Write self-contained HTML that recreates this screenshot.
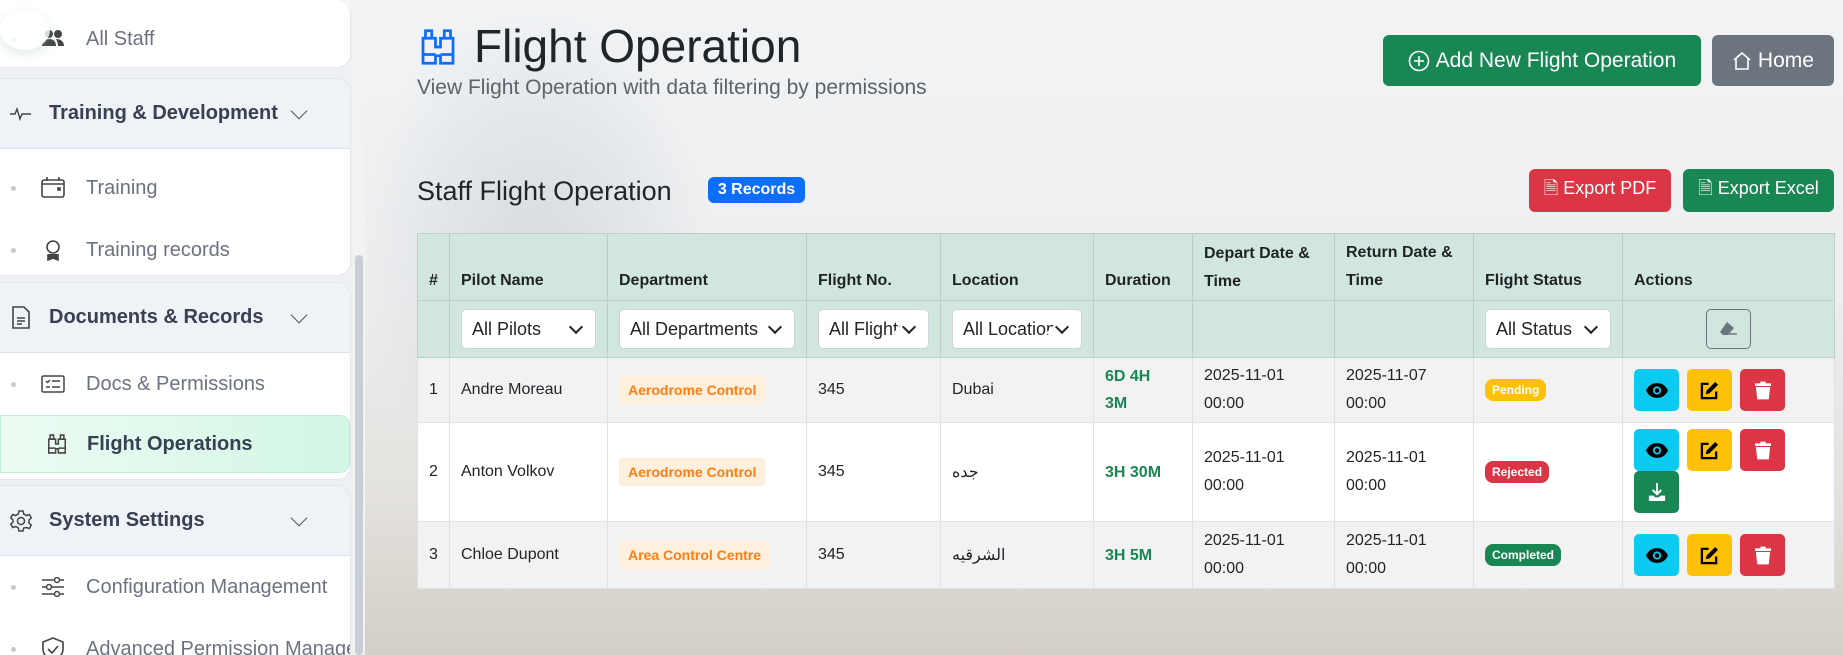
<!DOCTYPE html>
<html style="width:1843px;height:655px;overflow:hidden"><head><meta charset="utf-8"><style>
*{box-sizing:border-box;margin:0;padding:0}
body{width:1843px;height:655px;overflow:hidden;font-family:"Liberation Sans","Noto Sans CJK SC",sans-serif;position:relative;background:#eceef0}
.main{position:absolute;left:355px;top:0;width:1488px;height:655px;background:linear-gradient(180deg,#f1f3f5 0%,#edeef0 45%,#e4e2de 75%,#d3cec6 100%);overflow:hidden}
.tower{position:absolute;left:0;top:0;width:360px;height:420px;background:radial-gradient(ellipse at 50% 60%,rgba(190,200,205,.5),rgba(230,234,237,0) 70%)}
.side{position:absolute;left:0;top:0;width:353px;height:655px;background:#eef0f3;overflow:hidden}
.card{position:absolute;left:0;width:351px;background:#fff;border:1px solid #e2e6ea;border-left:none;border-radius:0 14px 14px 0;overflow:hidden}
.gh{height:70px;background:#eff2f6;border-bottom:1px solid #dde3ea;display:flex;align-items:center;font-size:20px;font-weight:bold;color:#374151;position:relative;white-space:nowrap}
.gh svg{margin-left:10px;margin-right:17px}
.gh .chev{position:absolute;left:293px;top:26px;width:12px;height:12px;border-right:1.5px solid #555;border-bottom:1.5px solid #555;transform:rotate(45deg)}
.it{height:62px;display:flex;align-items:center;font-size:20px;color:#6b7280;position:relative;white-space:nowrap}
.it .dot{flex:none;width:5px;height:5px;border-radius:50%;background:#c5cad1;margin-left:11px;margin-right:25px}
.it svg{margin-right:21px;flex:none}
.scroll{position:absolute;left:353px;top:0;width:12px;height:655px;background:#f2f2f2}
.thumb{position:absolute;left:355px;top:255px;width:8px;height:400px;background:#c9ced6;border-radius:4px}
.btn{position:absolute;border-radius:6px;color:#fff;display:flex;align-items:center;justify-content:center;font-size:21px}
table{position:absolute;left:417px;top:233px;border-collapse:collapse;table-layout:fixed;font-size:16px;color:#212529}
td,th{border:1px solid #dee2e6;padding:0 11px;vertical-align:middle;text-align:left}
th{background:#d1e7dd;font-weight:bold;border-color:#bcd0c7;color:#1f2328}
.fr td{background:#d1e7dd;border-color:#bcd0c7}
.sel{background:#fff;border:1px solid #ced4da;border-radius:5px;height:40px;display:flex;align-items:center;padding-left:10px;font-size:18px;white-space:nowrap;overflow:hidden;position:relative;color:#212529}
.sel:after{content:"";position:absolute;right:14px;top:12px;width:8px;height:8px;border-right:2px solid #222;border-bottom:2px solid #222;transform:rotate(45deg);background:#fff;box-shadow:4px 4px 0 6px #fff}
.r1 td,.r3 td{background:#f2f2f2}
.r2 td{background:#fff}
.dept{background:#fff0dd;color:#fd7e14;font-weight:bold;font-size:14px;padding:6px 9px;border-radius:4px;display:inline-block;white-space:nowrap}
.dur{color:#198754;font-weight:bold;font-size:16px;line-height:27px}
.dt{line-height:28px}
.st{font-size:12px;font-weight:bold;padding:4px 7px;border-radius:8px;color:#fff;display:inline-block}
.ab{display:inline-flex;align-items:center;justify-content:center;width:45px;height:42px;border-radius:5px;margin-right:8px;vertical-align:top}
</style></head><body>
<div class="main"><div class="tower"></div></div>
<div class="side">
 <div style="position:absolute;left:0;top:0;width:351px;height:30px;background:#f5f6f7"></div>
 <div style="position:absolute;left:28px;top:0;font-size:26px;font-weight:bold;color:#fff;opacity:.7">AVIATION HR</div>
 <div class="card" style="top:0;height:68px;border-top:none"><div class="it" style="height:30px;margin-top:24px"><span class="dot"></span><svg width="24" height="20" viewBox="0 0 24 20" fill="#444"><circle cx="8" cy="5" r="4"/><circle cx="17" cy="5" r="4"/><path d="M1 17c0-5 3-7 7-7s7 2 7 7zM15 10c4 0 8 2 8 7h-6c0-3-1-5-2-7z"/></svg>All Staff</div></div>
 <div style="position:absolute;left:0;top:10px;width:50px;height:40px;border-radius:50%;background:rgba(255,255,255,.8);box-shadow:0 4px 10px rgba(120,180,160,.25)"></div>
 <div class="card" style="top:78px;height:198px"><div class="gh"><svg width="22" height="14" viewBox="0 0 22 14" fill="none" stroke="#444" stroke-width="1.4"><path d="M0 7h5l2-5 3 10 2-5h9"/></svg>Training &amp; Development<span class="chev"></span></div>
  <div class="it" style="margin-top:8px"><span class="dot"></span><svg width="24" height="22" viewBox="0 0 24 22" fill="none" stroke="#444" stroke-width="1.6"><rect x="1" y="3" width="22" height="17" rx="2"/><path d="M1 7h22M6 0v4M18 0v4"/><rect x="17" y="11" width="2" height="2" fill="#444"/></svg>Training</div>
  <div class="it"><span class="dot"></span><svg width="24" height="24" viewBox="0 0 24 24" fill="none" stroke="#444" stroke-width="1.6"><circle cx="12" cy="9" r="6"/><path d="M7 16v6l5-2 5 2v-6" fill="#444"/></svg>Training records</div></div>
 <div class="card" style="top:282px;height:198px"><div class="gh"><svg width="22" height="24" viewBox="0 0 22 24" fill="none" stroke="#444" stroke-width="1.6"><path d="M3 1h11l5 5v16H3z"/><path d="M7 12h8M7 15h8M7 18h5"/></svg>Documents &amp; Records<span class="chev"></span></div>
  <div class="it"><span class="dot"></span><svg width="24" height="18" viewBox="0 0 24 18" fill="none" stroke="#444" stroke-width="1.5"><rect x="1" y="1" width="22" height="16" rx="1.5"/><path d="M5 6l1.5 1.5L9 5M5 12h4M11 6h8M11 12h8"/></svg>Docs &amp; Permissions</div>
  <div class="it" style="height:58px;background:linear-gradient(90deg,#ecfbf3,#d2f7e4);border:1px solid #bfeed6;border-radius:0 10px 10px 0;font-weight:bold;color:#374151;padding-left:45px"><svg width="22" height="22" viewBox="0 0 16 16" fill="none" stroke="#444" stroke-width="1.1" style="margin-right:19px"><path d="M3 1.5h2.5v3h-2.5zM10.5 1.5h2.5v3h-2.5zM2 4.5h5v3.5h2V4.5h5v10h-5v-3h-2v3h-5zM2 11h5M9 11h5"/></svg>Flight Operations</div></div>
 <div class="card" style="top:485px;height:180px"><div class="gh"><svg width="22" height="22" viewBox="0 0 22 22" fill="none" stroke="#444" stroke-width="1.5"><circle cx="11" cy="11" r="3.5"/><path d="M9 1h4l.7 3 2.6 1.5 3-1 2 3.4-2.3 2.1v3l2.3 2.1-2 3.4-3-1L13.7 18 13 21H9l-.7-3-2.6-1.5-3 1-2-3.4L3 12v-2L.7 7.9l2-3.4 3 1L8.3 4z"/></svg>System Settings<span class="chev"></span></div>
  <div class="it"><span class="dot"></span><svg width="24" height="20" viewBox="0 0 24 20" fill="none" stroke="#444" stroke-width="1.5"><path d="M1 3h22M1 10h22M1 17h22"/><circle cx="16" cy="3" r="2.5" fill="#fff"/><circle cx="8" cy="10" r="2.5" fill="#fff"/><circle cx="16" cy="17" r="2.5" fill="#fff"/></svg>Configuration Management</div>
  <div class="it"><span class="dot"></span><svg width="24" height="24" viewBox="0 0 24 24" fill="none" stroke="#444" stroke-width="1.6"><path d="M12 1l10 4v7c0 6-5 10-10 11C7 22 2 18 2 12V5z"/><path d="M7 12l4 4 6-7"/></svg>Advanced Permission Manage</div></div>
</div>
<div class="scroll"></div><div class="thumb"></div>

<svg style="position:absolute;left:418px;top:27px" width="40" height="40" viewBox="0 0 16 16" fill="none" stroke="#0d6efd" stroke-width="1.1"><path d="M3 1.5h2.5v3h-2.5zM10.5 1.5h2.5v3h-2.5zM2 4.5h5v3.5h2V4.5h5v10h-5v-3h-2v3h-5zM2 11h5M9 11h5"/></svg>
<div style="position:absolute;left:474px;top:19px;font-size:46px;color:#212529">Flight Operation</div>
<div style="position:absolute;left:417px;top:76px;font-size:21px;color:#5c636a">View Flight Operation with data filtering by permissions</div>
<div class="btn" style="left:1383px;top:35px;width:318px;height:51px;background:#198754"><svg width="22" height="22" viewBox="0 0 22 22" fill="none" stroke="#fff" stroke-width="1.6"><circle cx="11" cy="11" r="9.5"/><path d="M11 6v10M6 11h10"/></svg>&nbsp;Add New Flight Operation</div>
<div class="btn" style="left:1712px;top:35px;width:122px;height:51px;background:#6c757d"><svg width="20" height="20" viewBox="0 0 20 20" fill="none" stroke="#fff" stroke-width="1.6"><path d="M2 9l8-7 8 7M4 7v11h12V7"/></svg>&nbsp;Home</div>
<div style="position:absolute;left:417px;top:176px;font-size:27px;color:#212529">Staff Flight Operation</div>
<div style="position:absolute;left:708px;top:177px;width:97px;height:26px;background:#0d6efd;border-radius:6px;color:#fff;font-weight:bold;font-size:16px;display:flex;align-items:center;justify-content:center">3 Records</div>
<div class="btn" style="left:1529px;top:169px;width:142px;height:43px;background:#dc3545;font-size:18px">🗎 Export PDF</div>
<div class="btn" style="left:1683px;top:169px;width:151px;height:43px;background:#198754;font-size:18px">🗎 Export Excel</div>

<svg width="0" height="0" style="position:absolute"><defs>
<symbol id="eye" viewBox="0 0 24 16"><path d="M0 8C3 2 7 0 12 0s9 2 12 8c-3 6-7 8-12 8S3 14 0 8z" fill="#000"/><circle cx="12" cy="8" r="4.5" fill="#0dcaf0"/><circle cx="12" cy="8" r="2.5" fill="#000"/></symbol>
<symbol id="ed" viewBox="0 0 20 20"><path d="M9 3H2v15h15v-7" fill="none" stroke="#000" stroke-width="2.4"/><path d="M16 1l3 3-9 9-4 1 1-4z" fill="#000"/></symbol>
<symbol id="tr" viewBox="0 0 18 20"><path d="M6 0h6v2h6v3H0V2h6zM1 6h16l-1.5 14h-13z" fill="#fff"/></symbol>
<symbol id="dl" viewBox="0 0 20 20"><path d="M9 0h2v10l3-3 1.5 1.5L10 14 4.5 8.5 6 7l3 3zM1 14h5l2 2h4l2-2h5v6H1z" fill="#fff"/></symbol>
</defs></svg>
<table>
<colgroup><col style="width:32px"><col style="width:158px"><col style="width:199px"><col style="width:134px"><col style="width:153px"><col style="width:99px"><col style="width:142px"><col style="width:139px"><col style="width:149px"><col style="width:212px"></colgroup>
<tr style="height:67px"><th style="vertical-align:bottom;padding-bottom:10px">#</th><th style="vertical-align:bottom;padding-bottom:10px">Pilot Name</th><th style="vertical-align:bottom;padding-bottom:10px">Department</th><th style="vertical-align:bottom;padding-bottom:10px">Flight No.</th><th style="vertical-align:bottom;padding-bottom:10px">Location</th><th style="vertical-align:bottom;padding-bottom:10px">Duration</th><th style="line-height:28px;padding-top:2px">Depart Date &amp; Time</th><th style="line-height:28px">Return Date &amp; Time</th><th style="vertical-align:bottom;padding-bottom:10px">Flight Status</th><th style="vertical-align:bottom;padding-bottom:10px">Actions</th></tr>
<tr class="fr" style="height:57px"><td></td><td><div class="sel">All Pilots</div></td><td><div class="sel">All Departments</div></td><td><div class="sel">All Flights</div></td><td><div class="sel">All Locations</div></td><td></td><td></td><td></td><td><div class="sel">All Status</div></td><td style="text-align:center"><div style="display:inline-flex;align-items:center;justify-content:center;width:45px;height:40px;border:1.5px solid #6c757d;border-radius:5px"><svg width="20" height="16" viewBox="0 0 20 16"><path d="M8 1l7 6-6 7H4L1 11z" fill="#6c757d"/><path d="M5 13h13" stroke="#6c757d" stroke-width="1.5"/></svg></div></td></tr>
<tr class="r1" style="height:65px"><td>1</td><td>Andre Moreau</td><td><span class="dept">Aerodrome Control</span></td><td>345</td><td>Dubai</td><td class="dur">6D 4H<br>3M</td><td class="dt">2025-11-01<br>00:00</td><td class="dt">2025-11-07<br>00:00</td><td><span class="st" style="background:#ffc107">Pending</span></td><td><span class="ab" style="background:#0dcaf0"><svg width="22" height="15"><use href="#eye"/></svg></span><span class="ab" style="background:#ffc107"><svg width="19" height="19"><use href="#ed"/></svg></span><span class="ab" style="background:#dc3545"><svg width="16" height="19"><use href="#tr"/></svg></span></td></tr>
<tr class="r2" style="height:99px"><td>2</td><td>Anton Volkov</td><td><span class="dept">Aerodrome Control</span></td><td>345</td><td>جده</td><td class="dur">3H 30M</td><td class="dt">2025-11-01<br>00:00</td><td class="dt">2025-11-01<br>00:00</td><td><span class="st" style="background:#dc3545">Rejected</span></td><td style="padding-top:6px;vertical-align:top"><span class="ab" style="background:#0dcaf0"><svg width="22" height="15"><use href="#eye"/></svg></span><span class="ab" style="background:#ffc107"><svg width="19" height="19"><use href="#ed"/></svg></span><span class="ab" style="background:#dc3545"><svg width="16" height="19"><use href="#tr"/></svg></span><br><span class="ab" style="background:#198754"><svg width="18" height="18"><use href="#dl"/></svg></span></td></tr>
<tr class="r3" style="height:67px"><td>3</td><td>Chloe Dupont</td><td><span class="dept">Area Control Centre</span></td><td>345</td><td>الشرقيه</td><td class="dur">3H 5M</td><td class="dt">2025-11-01<br>00:00</td><td class="dt">2025-11-01<br>00:00</td><td><span class="st" style="background:#198754">Completed</span></td><td><span class="ab" style="background:#0dcaf0"><svg width="22" height="15"><use href="#eye"/></svg></span><span class="ab" style="background:#ffc107"><svg width="19" height="19"><use href="#ed"/></svg></span><span class="ab" style="background:#dc3545"><svg width="16" height="19"><use href="#tr"/></svg></span></td></tr>
</table>
</body></html>
